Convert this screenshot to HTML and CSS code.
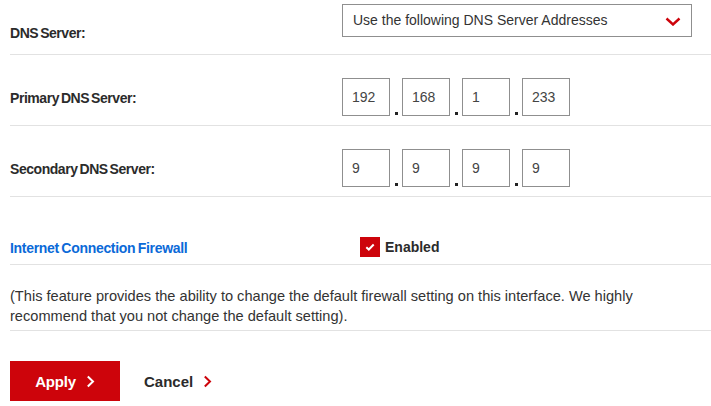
FILE: index.html
```html
<!DOCTYPE html>
<html>
<head>
<meta charset="utf-8">
<link rel="stylesheet" href="styles.css">
</head>
<body>
<div class="form">
  <div class="row row-dns">
    <div class="label">DNS Server:</div>
    <div class="field">
      <div class="select">
        <span>Use the following DNS Server Addresses</span>
        <svg class="chev-down" width="16" height="9" viewBox="0 0 16 9"><polyline points="1.5,1.5 8,7.5 14.5,1.5" fill="none" stroke="#cd040b" stroke-width="2.4"/></svg>
      </div>
    </div>
  </div>
  <div class="row row-ip">
    <div class="label">Primary DNS Server:</div>
    <div class="field ip">
      <div class="octet">192</div><span class="dot"></span>
      <div class="octet">168</div><span class="dot"></span>
      <div class="octet">1</div><span class="dot"></span>
      <div class="octet">233</div>
    </div>
  </div>
  <div class="row row-ip">
    <div class="label">Secondary DNS Server:</div>
    <div class="field ip">
      <div class="octet">9</div><span class="dot"></span>
      <div class="octet">9</div><span class="dot"></span>
      <div class="octet">9</div><span class="dot"></span>
      <div class="octet">9</div>
    </div>
  </div>
  <div class="row row-fw">
    <div class="label link">Internet Connection Firewall</div>
    <div class="field check-field">
      <span class="checkbox"><svg width="10" height="8" viewBox="0 0 10 8"><polyline points="1.3,4.2 3.8,6.5 8.7,1.5" fill="none" stroke="#fff" stroke-width="2"/></svg></span>
      <span class="check-label">Enabled</span>
    </div>
  </div>
  <div class="row row-note">
    <p>(This feature provides the ability to change the default firewall setting on this interface. We highly recommend that you not change the default setting).</p>
  </div>
  <div class="actions">
    <button class="btn-apply">Apply <svg width="9" height="13" viewBox="0 0 9 13"><polyline points="1.8,1.5 7,6.5 1.8,11.5" fill="none" stroke="#fff" stroke-width="2"/></svg></button>
    <button class="btn-cancel">Cancel <svg width="9" height="13" viewBox="0 0 9 13"><polyline points="1.8,1.5 7,6.5 1.8,11.5" fill="none" stroke="#cd040b" stroke-width="2"/></svg></button>
  </div>
</div>
</body>
</html>
```
FILE: styles.css
```css
* { box-sizing: border-box; }
html, body { margin: 0; padding: 0; background: #fff; }
body { font-family: "Liberation Sans", Arial, sans-serif; color: #333; width: 711px; height: 406px; overflow: hidden; }
.form { padding-left: 10px; }
.row { display: flex; border-bottom: 1px solid #e2e2e2; }
.label { width: 332px; font-weight: bold; font-size: 14px; color: #2b2b2b; letter-spacing: -0.45px; word-spacing: -1.5px; }
.label.link { color: #0b6ad8; letter-spacing: -0.3px; word-spacing: -1.2px; }
.row-dns { height: 55px; padding-top: 4px; }
.row-dns .label { padding-top: 21px; }
.select { width: 350px; height: 33px; border: 1px solid #8f8f8f; display: flex; align-items: center; justify-content: space-between; padding: 0 10px 1px 10px; font-size: 14px; color: #333; }
.chev-down { margin-top: 2px; }
.row-ip { height: 71px; padding-top: 23px; }
.row-ip .label { padding-top: 12px; }
.ip { display: flex; }
.octet { width: 48px; height: 38px; border: 1px solid #8f8f8f; font-size: 14px; color: #444; padding: 10px 0 0 9px; }
.dot { width: 12px; height: 38px; display: flex; justify-content: center; align-items: flex-end; padding-bottom: 1px; }
.dot::after { content: ""; width: 3px; height: 3px; background: #222; }
.row-fw { height: 68px; padding-top: 40px; }
.row-fw .label { padding-top: 3px; }
.check-field { display: flex; align-items: center; padding-left: 18px; height: 20px; }
.checkbox { width: 20px; height: 20px; background: #cd040b; display: flex; align-items: center; justify-content: center; }
.check-label { font-weight: bold; font-size: 14px; color: #2b2b2b; margin-left: 5px; }
.row-note { height: 66px; padding-top: 21px; }
.row-note p { margin: 0; font-size: 14.6px; line-height: 20px; color: #333; width: 660px; }
.actions { display: flex; align-items: center; padding-top: 30px; gap: 24px; }
.btn-apply { width: 110px; height: 40px; background: #cd040b; color: #fff; border: 0; font-family: inherit; font-weight: bold; font-size: 15px; letter-spacing: -0.2px; display: flex; align-items: center; justify-content: center; gap: 10px; padding: 0; }
.btn-cancel { background: none; border: 0; padding: 0; font-family: inherit; font-weight: bold; font-size: 15px; color: #2b2b2b; display: flex; align-items: center; gap: 10px; }
```
